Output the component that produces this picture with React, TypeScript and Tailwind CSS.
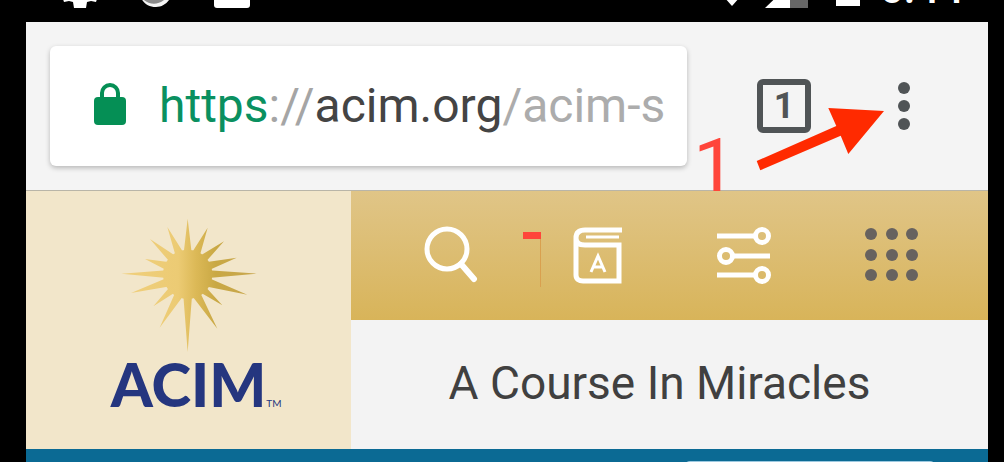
import type { ReactNode } from "react";

function StatusBar() {
  return (
    <div className="flex h-[22px] items-end justify-between overflow-hidden bg-black pl-9 pr-6">
      <div className="flex items-end gap-10 pb-3.5 text-white">
        {/* Settings */}
        <svg viewBox="0 0 36 36" className="h-9 w-9" fill="currentColor">
          <path d="M12 36h12l1-6 4-1 5 1 2-6-4-6 4-6-4-8-6 2-2-2H12l-2 2-6-2-4 8 4 6-4 6 2 6 5-1 4 1z" />
        </svg>
        {/* Sync ring */}
        <svg viewBox="0 0 36 36" className="h-9 w-9">
          <circle cx="18" cy="17" r="17" fill="#8a8a8a" />
          <path d="M2 24c5 7 15 11 24 4l8-7c-2 8-8 14-16 14S5 31 2 24z" fill="#f4f4f4" />
        </svg>
        <svg viewBox="0 0 36 36" className="h-9 w-9" fill="currentColor">
          <rect width="36" height="36" rx="3" />
        </svg>
      </div>
      <div className="flex items-end pb-3.5 text-white">
        {/* Wifi, signal and battery */}
        <svg viewBox="0 0 140 40" className="h-10 w-[140px]" fill="currentColor">
          <path d="M0 10C14-2 36-2 50 10L25 38z" />
          <path d="M58 40L83 16V40z" />
          <path d="M83 0h18v40H83z" fill="#666" />
          <path d="M129 0h24v38h-24z" />
        </svg>
        <svg viewBox="0 0 16 40" className="h-10 w-4" fill="currentColor">
          <path d="M0 0h13v38H0z" />
        </svg>
        <span className="-mb-0.5 ml-4 text-[43px] font-medium leading-none">6:44</span>
      </div>
    </div>
  );
}

function Toolbar() {
  return (
    <div className="relative flex items-center border-b border-[#b9b5a8] bg-[#f4f4f4] p-6">
      <div
        role="textbox"
        tabIndex={0}
        aria-label="Address"
        className="flex h-[120px] w-[637px] shrink items-center overflow-hidden whitespace-nowrap rounded-md bg-white pl-11 text-[48px] text-[#444] shadow-[0_2px_5px_rgba(0,0,0,0.25)]"
      >
        <svg viewBox="0 0 32 46" className="mr-[33px] h-[46px] w-8 shrink-0">
          <rect y="14" width="32" height="28" rx="4" fill="#058f55" />
          <path d="M8 16V10a8 8 0 0 1 16 0v6" fill="none" stroke="#058f55" strokeWidth="4" />
        </svg>
        <span>
          <span className="text-[#0a9060]">https</span>
          <span className="text-[#a5a5a5]">://</span>
          acim.org
          <span className="text-[#acacac]">/acim-s</span>
        </span>
      </div>

      <button
        aria-label="Open tabs"
        className="ml-[70px] flex h-[54px] w-[54px] shrink-0 items-center justify-center rounded-md border-[6px] border-[#505456] text-4xl font-bold text-[#505456]"
      >
        1
      </button>
      <button aria-label="Menu" className="ml-[86px] shrink-0 text-[#505456]">
        <svg viewBox="0 0 13 48" className="h-12 w-[13px]" fill="currentColor">
          <circle cx="7" cy="6" r="6" />
          <circle cx="7" cy="24" r="6" />
          <circle cx="7" cy="42" r="6" />
        </svg>
      </button>

      {/* Step marker and arrow */}
      <span className="absolute right-[252px] top-[106px] text-[76px] leading-none text-[#ff453a]">1</span>
      <svg viewBox="756 108 128 63" className="absolute right-[104px] top-[86px] h-[63px] w-32">
        <path d="M756.7 161L836.3 126L828.3 108L884 111L848.3 154L840.7 135.7L760.3 170.3z" fill="#ff2a00" />
      </svg>
    </div>
  );
}

function Logo() {
  return (
    <a href="#" className="flex w-[325px] shrink-0 flex-col items-center bg-[#f2e6ca] pt-[26px]">
      <svg viewBox="85 50 420 411" className="h-[137px] w-[140px]">
        <defs>
          <linearGradient id="sun" gradientUnits="userSpaceOnUse" x1="92" y1="0" x2="498" y2="0">
            <stop offset="0" stopColor="#f0cf7c" />
            <stop offset="0.42" stopColor="#eccb74" />
            <stop offset="0.55" stopColor="#dcb957" />
            <stop offset="0.7" stopColor="#c9a844" />
            <stop offset="1" stopColor="#c8a750" />
          </linearGradient>
        </defs>
        <path
          fill="url(#sun)"
          d="M217 222a74 74 0 1 1 148 0a74 74 0 1 1-148 0z"
        />
        <path
          fill="url(#sun)"
          d="M291 55L303 158L351 82L327 167L400 123L344 186L438 172L354 210L498 220L354 233L470 283L343 258L395 315L328 276L380 385L304 286L291 455L278 286L207 382L254 276L188 318L239 258L121 278L228 233L92 220L228 210L163 176L238 186L178 116L255 167L230 80L279 158z"
        />
      </svg>
      <span className="relative font-[Lato,sans-serif] text-[60px] font-black leading-[60px] text-[#25367f]">
        ACIM
        <span className="absolute bottom-1.5 left-full text-[10px] font-normal leading-none">TM</span>
      </span>
    </a>
  );
}

function IconButton({ label, children }: { label: string; children: ReactNode }) {
  return (
    <button aria-label={label} className="text-white">
      <svg viewBox="0 0 54 60" className="h-[60px] w-[54px]" fill="none" stroke="currentColor">
        {children}
      </svg>
    </button>
  );
}

const dots = [6, 27, 47];

function NavBar() {
  return (
    <nav className="relative flex h-[129px] items-center justify-between bg-linear-to-b from-[#e0c587] to-[#d8b459] pl-[73px] pr-[70px]">
      <IconButton label="Search">
        <circle cx="23" cy="23" r="20" strokeWidth="5" />
        <path d="M37 38L50 53" strokeWidth="6" strokeLinecap="round" />
      </IconButton>
      <IconButton label="Dictionary">
        <path d="M51 4H14c-6 0-9 3-9 8s3 7 9 7h34v36H12c-4 0-7-2-7-6V12" strokeWidth="5" />
        <path d="M15 11h33" strokeWidth="3" />
        <path d="M20 46l7-16 7 16M22 41h10" strokeWidth="3" />
      </IconButton>
      <IconButton label="Settings">
        <path d="M0 10h38M14 30h39M0 49h38" strokeWidth="5" />
        <circle cx="45" cy="10" r="6.500" strokeWidth="5" />
        <circle cx="9" cy="30" r="6.500" strokeWidth="5" />
        <circle cx="45" cy="49" r="6.500" strokeWidth="5" />
      </IconButton>
      <IconButton label="Apps">
        {dots.map((y) =>
          dots.map((x) => <circle key={`${x}-${y}`} cx={x + 1} cy={y + 2} r="6" fill="#67625f" stroke="none" />)
        )}
      </IconButton>

      {/* Dash marker */}
      <svg viewBox="0 0 20 57" className="absolute right-[446px] top-10 h-[57px] w-5">
        <path d="M1 1h18v7H1z" fill="#ff453a" />
        <path d="M18.500 8v48" stroke="#d9a04f" strokeWidth="1" />
      </svg>
    </nav>
  );
}

export default function App() {
  return (
    <div className="min-h-screen overflow-hidden bg-black pl-[26px] pr-4 font-[Roboto,sans-serif]">
      <StatusBar />
      <Toolbar />
      <header className="flex">
        <Logo />
        <div className="grow">
          <NavBar />
          <h1 className="flex h-[129px] items-center justify-center whitespace-nowrap bg-[#f3f3f3] pb-0.5 pr-5 text-[46px] text-[#404040]">
            A Course In Miracles
          </h1>
        </div>
      </header>
      <div className="flex h-[13px] justify-end overflow-hidden bg-[#0b6a94] pr-[52px] pt-3">
        <div className="h-10 w-[252px] shrink-0 rounded-md bg-[#9cc9e0]" />
      </div>
    </div>
  );
}
